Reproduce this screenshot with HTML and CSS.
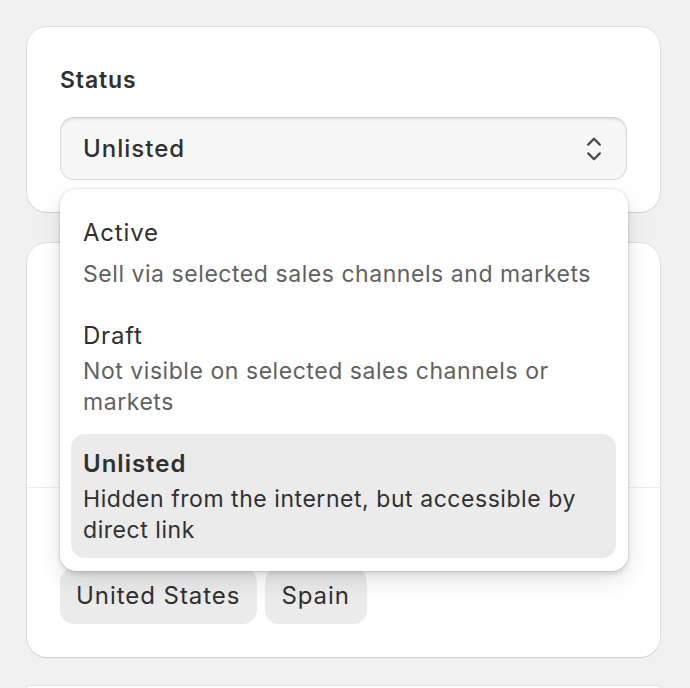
FILE: index.html
```html
<!DOCTYPE html>
<html lang="en">
<head>
<meta charset="utf-8">
<title>Status</title>
<link rel="stylesheet" href="styles.css">
</head>
<body>
<div class="page">
  <section class="card status-card">
    <div class="label">Status</div>
    <div class="select">
      <span class="select-value">Unlisted</span>
      <svg class="select-icon" width="18" height="26" viewBox="0 0 18 26" aria-hidden="true">
        <polyline points="3.2,8.6 9,2.8 14.8,8.6" fill="none" stroke="#4a4a4a" stroke-width="2.3" stroke-linecap="round" stroke-linejoin="round"/>
        <polyline points="3.2,17.4 9,23.2 14.8,17.4" fill="none" stroke="#4a4a4a" stroke-width="2.3" stroke-linecap="round" stroke-linejoin="round"/>
      </svg>
    </div>
    <div class="dropdown">
      <div class="option option-first">
        <div class="option-title">Active</div>
        <div class="option-desc">Sell via selected sales channels and markets</div>
      </div>
      <div class="option">
        <div class="option-title">Draft</div>
        <div class="option-desc">Not visible on selected sales channels or markets</div>
      </div>
      <div class="option selected">
        <div class="option-title">Unlisted</div>
        <div class="option-desc">Hidden from the internet, but accessible by direct link</div>
      </div>
    </div>
  </section>

  <section class="card publish-card">
    <div class="publish-top"></div>
    <div class="divider"></div>
    <div class="publish-bottom">
      <div class="pills">
        <span class="pill">United States</span>
        <span class="pill">Spain</span>
      </div>
    </div>
  </section>

  <section class="card next-card"></section>
</div>
</body>
</html>
```

FILE: styles.css
```css
html, body {
  margin: 0;
  padding: 0;
  background: #f1f1f1;
}

body {
  font-family: Inter, "Noto Sans", "Liberation Sans", sans-serif;
  color: #303030;
  overflow: hidden;
  height: 688px;
}

.page {
  padding: 27px 30px 0 27px;
  display: flex;
  flex-direction: column;
  gap: 31px;
}

.card {
  background: #ffffff;
  border-radius: 20px;
  box-shadow: 0 0 0 1px rgba(0, 0, 0, 0.07), 0 1px 1px rgba(0, 0, 0, 0.08);
}

.status-card {
  position: relative;
  padding: 37px 33px 32px 33px;
}

.label {
  font-size: 23px;
  line-height: 32px;
  font-weight: 600;
  letter-spacing: 0.9px;
  color: #303030;
  margin-bottom: 21px;
}

.select {
  height: 63px;
  box-sizing: border-box;
  background: #f7f7f7;
  border: 1px solid #d9d9d9;
  border-top-color: #cfcfcf;
  border-radius: 14px;
  box-shadow: inset 0 2px 2px rgba(0, 0, 0, 0.07);
  display: flex;
  align-items: center;
  justify-content: space-between;
  padding: 0 23px 0 22px;
}

.select-value {
  font-size: 24px;
  line-height: 32px;
  font-weight: 550;
  letter-spacing: 1px;
  color: #303030;
}

.select-icon {
  display: block;
  margin-top: 1px;
}

.dropdown {
  position: absolute;
  z-index: 10;
  top: 162px;
  left: 33px;
  width: 568px;
  box-sizing: border-box;
  background: #ffffff;
  border-radius: 16px;
  padding: 13px 12px 13px 11px;
  display: flex;
  flex-direction: column;
  gap: 4px;
  box-shadow: 0 0 0 1px rgba(0, 0, 0, 0.06), 0 3px 5px rgba(0, 0, 0, 0.12), 0 10px 24px rgba(0, 0, 0, 0.1);
}

.option {
  border-radius: 14px;
  padding: 14px 12px 12px 12px;
}

.option-first {
  padding-top: 15px;
}

.option.selected {
  background: #ebebeb;
}

.option-title {
  font-size: 24px;
  line-height: 32px;
  font-weight: 400;
  letter-spacing: 0.8px;
  color: #303030;
}

.option.selected .option-title {
  font-weight: 600;
  letter-spacing: 1px;
}

.option-desc {
  font-size: 23px;
  line-height: 31px;
  letter-spacing: 0.55px;
  color: #616161;
  margin-top: 4px;
}

.option-first .option-desc {
  margin-top: 10px;
}

.option.selected .option-desc {
  color: #303030;
}

.publish-card {
  height: 414px;
  display: flex;
  flex-direction: column;
}

.publish-top {
  height: 244px;
}

.divider {
  height: 1px;
  background: #ebebeb;
}

.publish-bottom {
  padding: 80px 33px 33px 33px;
}

.pills {
  display: flex;
  gap: 8px;
}

.pill {
  height: 56px;
  box-sizing: border-box;
  padding: 12px 17px 12px 16px;
  background: #ebebeb;
  border-radius: 14px;
  font-size: 24px;
  line-height: 32px;
  letter-spacing: 0.95px;
  color: #303030;
}

.next-card {
  height: 2px;
  margin-top: -2px;
  flex-shrink: 0;
}
```
